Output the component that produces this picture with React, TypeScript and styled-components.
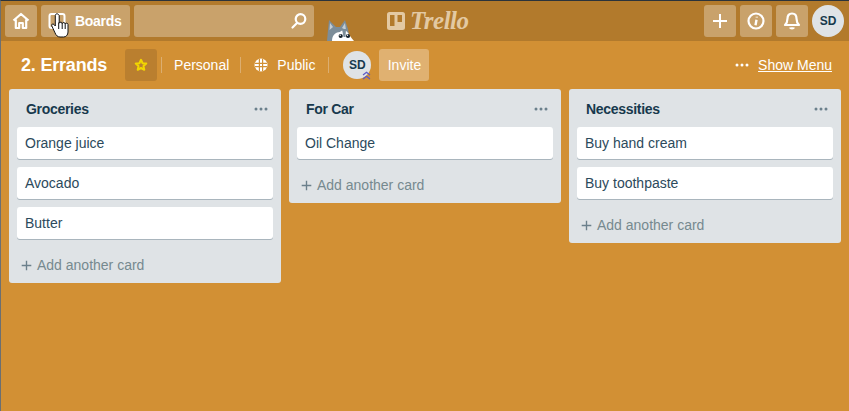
import React from 'react';
import styled, { createGlobalStyle } from 'styled-components';

const lists = [
	{ title: 'Groceries', cards: ['Orange juice', 'Avocado', 'Butter'] },
	{ title: 'For Car', cards: ['Oil Change'] },
	{ title: 'Necessities', cards: ['Buy hand cream', 'Buy toothpaste'] },
];

const HomeIcon = () => (
	<svg width="18" height="18" viewBox="0 0 18 18" fill="none" stroke="#fff" strokeWidth="2.2" strokeLinejoin="round">
		<path d="M1.5 8.5 9 2l7.500 6.500M3.800 7.500V16h3.400v-5h3.600v5h3.400V7.500" />
	</svg>
);

const BoardsIcon = () => (
	<svg width="18" height="18" viewBox="0 0 18 18" fill="none" stroke="#fff" strokeWidth="2">
		<rect x="1.500" y="2" width="15" height="14" rx="2" />
		<path d="M9 2v14" />
	</svg>
);

const SearchIcon = () => (
	<svg width="18" height="18" viewBox="0 0 18 18" fill="none" stroke="#fff" strokeWidth="2.200" strokeLinecap="round">
		<circle cx="10.500" cy="7" r="4.800" />
		<path d="M7 11 2.500 15.500" />
	</svg>
);

const PlusIcon = ({ size, color }: { size: number; color: string }) => (
	<svg width={size} height={size} viewBox="0 0 16 16" stroke={color} strokeWidth="2">
		<path d="M8 1v14M1 8h14" />
	</svg>
);

const MoreIcon = ({ color }: { color: string }) => (
	<svg width="14" height="4" viewBox="0 0 14 4" fill={color}>
		<circle cx="2" cy="2" r="1.500" />
		<circle cx="7" cy="2" r="1.500" />
		<circle cx="12" cy="2" r="1.500" />
	</svg>
);

const InfoIcon = () => (
	<svg width="20" height="20" viewBox="0 0 20 20" fill="none" stroke="#fff" strokeWidth="2.200">
		<circle cx="10" cy="10" r="7.500" />
		<path d="M10.800 5.800v.8M10.500 8.800 9.500 14.200" strokeWidth="2.400" />
	</svg>
);

const BellIcon = () => (
	<svg width="18" height="20" viewBox="0 0 18 20" fill="none" stroke="#fff" strokeWidth="2.200" strokeLinejoin="round">
		<path d="M9 2.500c-3 0-4.500 2.300-4.500 5 0 3.500-1 5-2.500 6.500h14c-1.500-1.500-2.500-3-2.500-6.500 0-2.700-1.500-5-4.500-5Z" />
		<path d="M7 16.500c.4 1.200 3.600 1.200 4 0" />
	</svg>
);

const StarIcon = () => (
	<svg width="14" height="14" viewBox="0 0 14 14" fill="none" stroke="#f2d600" strokeWidth="2" strokeLinejoin="round">
		<path d="m7 1.800 1.600 3.400 3.700.4-2.800 2.500.8 3.700L7 10l-3.300 1.800.8-3.700-2.800-2.500 3.700-.4Z" />
	</svg>
);

const GlobeIcon = () => (
	<svg width="14" height="14" viewBox="0 0 14 14">
		<circle cx="7" cy="7" r="6.500" fill="#fff" />
		<path d="M1 5.400h12M1 8.600h12M5.400 1v12M8.600 1v12" stroke="#d29034" strokeWidth="1.200" />
	</svg>
);

const ChevronsIcon = () => (
	<svg width="9" height="9" viewBox="0 0 9 9" fill="none" stroke="#5a5ac8" strokeWidth="1.200">
		<path d="m1 4 3.500-2.800L8 4M1 8l3.500-2.800L8 8" />
	</svg>
);

const LogoMark = () => (
	<svg width="18" height="18" viewBox="0 0 18 18">
		<path
			fill="#e3c9a3"
			fillRule="evenodd"
			d="M2.500 0h13A2.500 2.500 0 0 1 18 2.500v13a2.500 2.500 0 0 1-2.500 2.500h-13A2.500 2.500 0 0 1 0 15.500v-13A2.500 2.500 0 0 1 2.500 0ZM3 3v11h4.500V3Zm7.500 0v7H15V3Z"
		/>
	</svg>
);

const Husky = () => (
	<svg width="30" height="21" viewBox="0 0 30 21">
		<path d="M2 21 3 10 4 0l7 7h4l5-7 3 9 2 12Z" fill="#7c8d99" />
		<path d="M5 3 4.500 10 8 7ZM20 3l-3 5 4 2Z" fill="#c3ccd3" />
		<path d="M7 21c0-6 4-9 8-9 2-2 6-2 8 1 2 2 3 5 6 8Z" fill="#fff" />
		<path d="M17 9h4l-.500 8h-2Z" fill="#7c8d99" />
		<circle cx="15.700" cy="16" r="2.100" fill="#14202a" />
		<circle cx="23" cy="16" r="2.100" fill="#14202a" />
		<circle cx="15.200" cy="15.300" r=".7" fill="#fff" />
		<circle cx="22.500" cy="15.300" r=".7" fill="#fff" />
	</svg>
);

const HandCursor = () => (
	<svg width="18" height="25" viewBox="0 0 18 25">
		<path
			d="M6 .8c-1 0-1.700.8-1.700 1.800V13L3 11.500c-1-1.200-3-.2-2.200 1.400L4 19.800c1 2.500 2.500 4.200 5 4.200h3.500c2.500 0 4.500-2 4.500-5v-7.500c0-1.600-2.500-1.800-2.800-.5 0-1.700-2.500-2-3-.5 0-1.600-2.400-1.900-3-.3V2.600C7.700 1.600 7 .8 6 .8Z"
			fill="#fff"
			stroke="#111"
			strokeWidth="1"
			strokeLinejoin="round"
		/>
		<path d="M7.700 9.500V16M11.200 10v6M14.200 11v5" stroke="#111" strokeWidth="1" fill="none" />
	</svg>
);

const App = () => {
	return (
		<>
			<GlobalStyle />
			<Page>
				<TopBar>
					<NavGroup>
						<NavButton><HomeIcon /></NavButton>
						<BoardsButton>
							<BoardsIcon />
							<BoardsLabel>Boards</BoardsLabel>
							<CursorSpot><HandCursor /></CursorSpot>
						</BoardsButton>
						<SearchBox><SearchIcon /></SearchBox>
						<HuskySpot><Husky /></HuskySpot>
					</NavGroup>
					<Logo>
						<LogoMark />
						<LogoText>Trello</LogoText>
					</Logo>
					<NavGroup>
						<NavButton><PlusIcon size={16} color="#fff" /></NavButton>
						<NavButton><InfoIcon /></NavButton>
						<NavButton><BellIcon /></NavButton>
						<UserAvatar>SD</UserAvatar>
					</NavGroup>
				</TopBar>
				<BoardHeader>
					<BoardInfo>
						<BoardTitle>2. Errands</BoardTitle>
						<StarButton><StarIcon /></StarButton>
						<Divider />
						<PersonalText>Personal</PersonalText>
						<Divider />
						<PublicGroup>
							<GlobeIcon />
							<HeaderText>Public</HeaderText>
						</PublicGroup>
						<Divider />
						<MemberAvatar>
							SD
							<AdminBadge><ChevronsIcon /></AdminBadge>
						</MemberAvatar>
						<InviteButton>Invite</InviteButton>
					</BoardInfo>
					<MenuLink>
						<MoreIcon color="#fff" />
						<MenuLabel>Show Menu</MenuLabel>
					</MenuLink>
				</BoardHeader>
				<Lists>
					{lists.map((list) => (
						<List key={list.title}>
							<ListHeader>
								<ListTitle>{list.title}</ListTitle>
								<MoreIcon color="#6b808c" />
							</ListHeader>
							<Cards>
								{list.cards.map((card) => (
									<Card key={card}>{card}</Card>
								))}
							</Cards>
							<AddCard>
								<PlusIcon size={11} color="#6b808c" />
								Add another card
							</AddCard>
						</List>
					))}
				</Lists>
			</Page>
		</>
	);
};

export default App;

const GlobalStyle = createGlobalStyle`
	html, body {
		margin: 0;
		padding: 0;
		height: 100%;
		overflow: hidden;
	}

	* {
		box-sizing: border-box;
	}
`;

const Page = styled.div`
	display: flex;
	flex-direction: column;
	width: 849px;
	height: 411px;
	background-color: #d29034;
	border-top: 1px solid #2b333b;
	border-left: 1px solid #6b6f72;
	font-family: "Liberation Sans", Arial, sans-serif;
	color: #fff;
`;

const TopBar = styled.div`
	display: flex;
	justify-content: space-between;
	align-items: center;
	height: 40px;
	padding: 0 5px 0 4px;
	background-color: #b27a2c;
	position: relative;
`;

const NavGroup = styled.div`
	display: flex;
	align-items: center;
	gap: 4px;
	position: relative;
`;

const NavButton = styled.div`
	display: flex;
	align-items: center;
	justify-content: center;
	width: 32px;
	height: 32px;
	border-radius: 3px;
	background-color: #c9a26b;
`;

const BoardsButton = styled(NavButton)`
	position: relative;
	justify-content: flex-start;
	gap: 9px;
	width: 89px;
	padding-left: 7px;
`;

const BoardsLabel = styled.span`
	font-size: 14px;
	font-weight: 700;
	letter-spacing: -0.3px;
`;

const CursorSpot = styled.div`
	position: absolute;
	top: 8px;
	left: 10px;
	line-height: 0;
`;

const SearchBox = styled(NavButton)`
	justify-content: flex-end;
	width: 180px;
	padding-right: 6px;
`;

const HuskySpot = styled.div`
	position: absolute;
	left: 320px;
	top: 15px;
	line-height: 0;
`;

const Logo = styled.div`
	position: absolute;
	left: 386px;
	top: 11px;
	display: flex;
	align-items: center;
	gap: 5px;
	height: 18px;
`;

const LogoText = styled.span`
	font-family: "Liberation Serif", serif;
	font-style: italic;
	font-weight: 700;
	font-size: 25px;
	letter-spacing: -0.5px;
	color: #e3c9a3;
`;

const UserAvatar = styled.div`
	display: flex;
	align-items: center;
	justify-content: center;
	width: 32px;
	height: 32px;
	border-radius: 50%;
	background-color: #dfe3e6;
	color: #17394d;
	font-size: 12px;
	font-weight: 700;
`;

const BoardHeader = styled.div`
	display: flex;
	justify-content: space-between;
	align-items: center;
	height: 48px;
	padding: 0 17px 0 19px;
`;

const BoardInfo = styled.div`
	display: flex;
	align-items: center;
`;

const BoardTitle = styled.h1`
	margin: 0 18px 0 1px;
	font-size: 18px;
	font-weight: 700;
	letter-spacing: -0.2px;
	color: #fff;
`;

const StarButton = styled.div`
	display: flex;
	align-items: center;
	justify-content: center;
	width: 32px;
	height: 32px;
	border-radius: 3px;
	background-color: #ba7f2f;
`;

const Divider = styled.span`
	width: 1px;
	height: 16px;
	margin: 0 12px 0 4px;
	background-color: #dcae70;
`;

const HeaderText = styled.span`
	margin-right: 8px;
	font-size: 14px;
	color: #fff;
`;

const PersonalText = styled(HeaderText)`
	margin-right: 7px;
`;

const PublicGroup = styled.div`
	display: flex;
	align-items: center;
	gap: 9px;
	margin: 0 1px;
`;

const MemberAvatar = styled.div`
	position: relative;
	display: flex;
	align-items: center;
	justify-content: center;
	width: 28px;
	height: 28px;
	margin: 0 8px 0 2px;
	border-radius: 50%;
	background-color: #dfe3e6;
	color: #17394d;
	font-size: 12px;
	font-weight: 700;
`;

const AdminBadge = styled.span`
	position: absolute;
	right: 0;
	bottom: -1px;
	line-height: 0;
`;

const InviteButton = styled.div`
	display: flex;
	align-items: center;
	justify-content: center;
	width: 50px;
	height: 32px;
	border-radius: 3px;
	background-color: #e0b171;
	font-size: 14px;
	color: #fff;
`;

const MenuLink = styled.div`
	display: flex;
	align-items: center;
	gap: 9px;
`;

const MenuLabel = styled.span`
	font-size: 14px;
	text-decoration: underline;
`;

const Lists = styled.div`
	display: flex;
	align-items: flex-start;
	gap: 8px;
	padding-left: 8px;
`;

const List = styled.div`
	display: flex;
	flex-direction: column;
	width: 272px;
	padding-bottom: 8px;
	border-radius: 3px;
	background-color: #dfe3e6;
`;

const ListHeader = styled.div`
	display: flex;
	justify-content: space-between;
	align-items: center;
	height: 38px;
	padding: 2px 13px 0 17px;
`;

const ListTitle = styled.h2`
	margin: 0;
	font-size: 14px;
	font-weight: 700;
	letter-spacing: -0.3px;
	color: #17394d;
`;

const Cards = styled.div`
	display: flex;
	flex-direction: column;
	gap: 8px;
	padding: 0 8px;
`;

const Card = styled.div`
	display: flex;
	align-items: center;
	height: 32px;
	padding-left: 8px;
	border-radius: 3px;
	background-color: #fff;
	box-shadow: 0 1px 0 rgba(9, 45, 66, 0.25);
	font-size: 14px;
	color: #2c4a5c;
`;

const AddCard = styled.div`
	display: flex;
	align-items: center;
	gap: 5px;
	height: 20px;
	margin-top: 16px;
	padding-left: 12px;
	font-size: 14px;
	color: #76898f;
`;
